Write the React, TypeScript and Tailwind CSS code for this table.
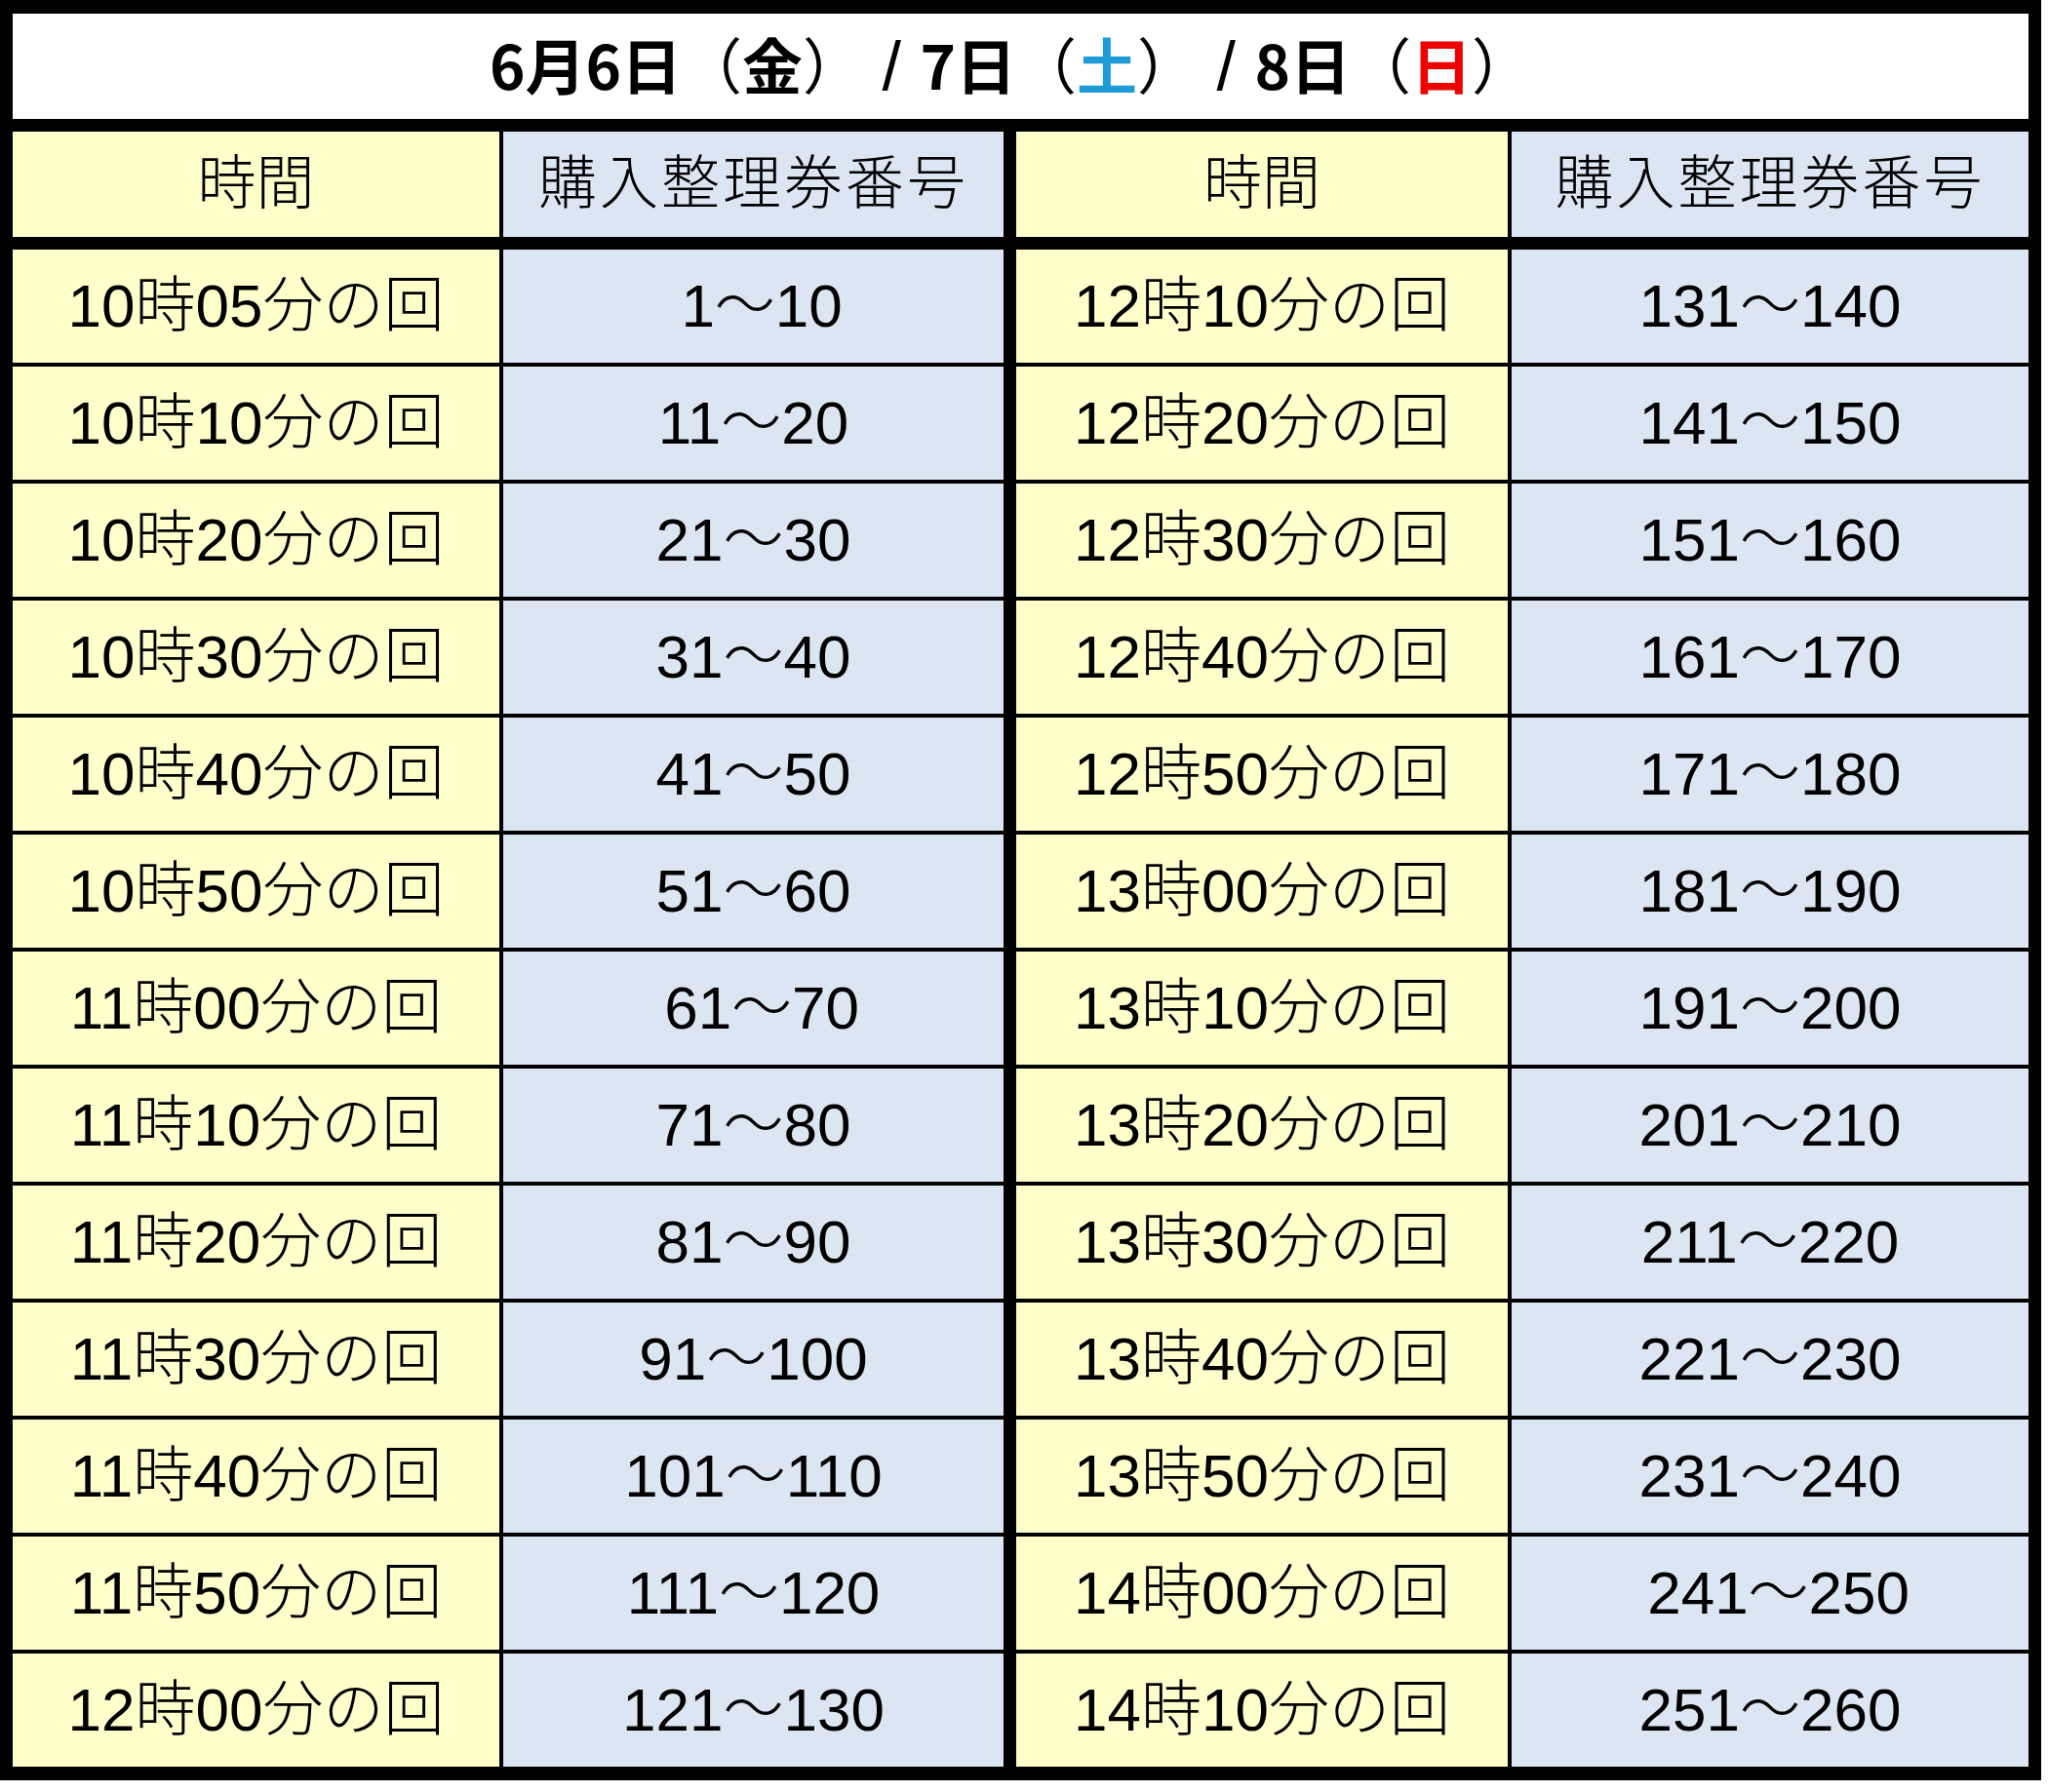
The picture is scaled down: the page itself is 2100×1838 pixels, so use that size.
const left = [
  ["10時05分の回", " 1～10"],
  ["10時10分の回", "11～20"],
  ["10時20分の回", "21～30"],
  ["10時30分の回", "31～40"],
  ["10時40分の回", "41～50"],
  ["10時50分の回", "51～60"],
  ["11時00分の回", " 61～70"],
  ["11時10分の回", "71～80"],
  ["11時20分の回", "81～90"],
  ["11時30分の回", "91～100"],
  ["11時40分の回", "101～110"],
  ["11時50分の回", "111～120"],
  ["12時00分の回", "121～130"],
];

const right = [
  ["12時10分の回", "131～140"],
  ["12時20分の回", "141～150"],
  ["12時30分の回", "151～160"],
  ["12時40分の回", "161～170"],
  ["12時50分の回", "171～180"],
  ["13時00分の回", "181～190"],
  ["13時10分の回", "191～200"],
  ["13時20分の回", "201～210"],
  ["13時30分の回", "211～220"],
  ["13時40分の回", "221～230"],
  ["13時50分の回", "231～240"],
  ["14時00分の回", " 241～250"],
  ["14時10分の回", "251～260"],
];

const font = "font-['Liberation_Sans','Noto_Sans_CJK_JP',sans-serif]";
const yellow = "bg-[#ffffcc]";
const blue = "bg-[#dce6f2]";

const Cell = ({ text, className }: { text: string; className: string }) => (
  <div className={`flex items-center justify-center whitespace-pre border-black ${className}`}>
    {text}
  </div>
);

// thin slash between the dates
const Slash = () => (
  <span className="font-normal text-[70px] font-['Liberation_Sans',sans-serif] whitespace-pre"> / </span>
);

const App = () => {
  return (
    <div className="bg-white w-[2100px] h-[1838px]">
      <div className={`w-[2093px] border-black border-x-[13px] border-t-[14px] border-b-[14px] text-black ${font}`}>
        {/* title */}
        <div className="h-[121px] flex items-center justify-center border-b-[13px] border-black bg-white pr-[20px]">
          <span className="text-[62px] leading-none font-bold font-['Noto_Sans_CJK_JP',sans-serif]">
            6月6日<span className="font-normal">（</span>金<span className="font-normal">）</span>
            <Slash />
            7日<span className="font-normal">（</span>
            <span className="text-[#1f9bd7]">土</span>
            <span className="font-normal">）</span>
            <Slash />
            8日<span className="font-normal">（</span>
            <span className="text-[#ee0000]">日</span>
            <span className="font-normal">）</span>
          </span>
        </div>

        {/* header */}
        <div className="flex h-[121px] border-b-[13px] border-black text-[60px] font-light leading-none">
          <Cell text="時間" className={`w-[503px] border-r-4 ${yellow}`} />
          <Cell text="購入整理券番号" className={`w-[526px] border-r-[13px] tracking-[3px] ${blue}`} />
          <Cell text="時間" className={`w-[508px] border-r-4 ${yellow}`} />
          <Cell text="購入整理券番号" className={`flex-1 tracking-[3px] ${blue}`} />
        </div>

        {/* rows */}
        {left.map((row, i) => (
          <div
            key={row[0]}
            className={`flex text-[62px] font-light leading-none ${
              i < left.length - 1 ? "h-[120px] border-b-4 border-black" : "h-[116px]"
            }`}
          >
            <Cell text={row[0]} className={`w-[503px] border-r-4 ${yellow}`} />
            <Cell text={row[1]} className={`w-[526px] border-r-[13px] ${blue}`} />
            <Cell text={right[i][0]} className={`w-[508px] border-r-4 ${yellow}`} />
            <Cell text={right[i][1]} className={`flex-1 ${blue}`} />
          </div>
        ))}
      </div>
    </div>
  );
};

export default App;
